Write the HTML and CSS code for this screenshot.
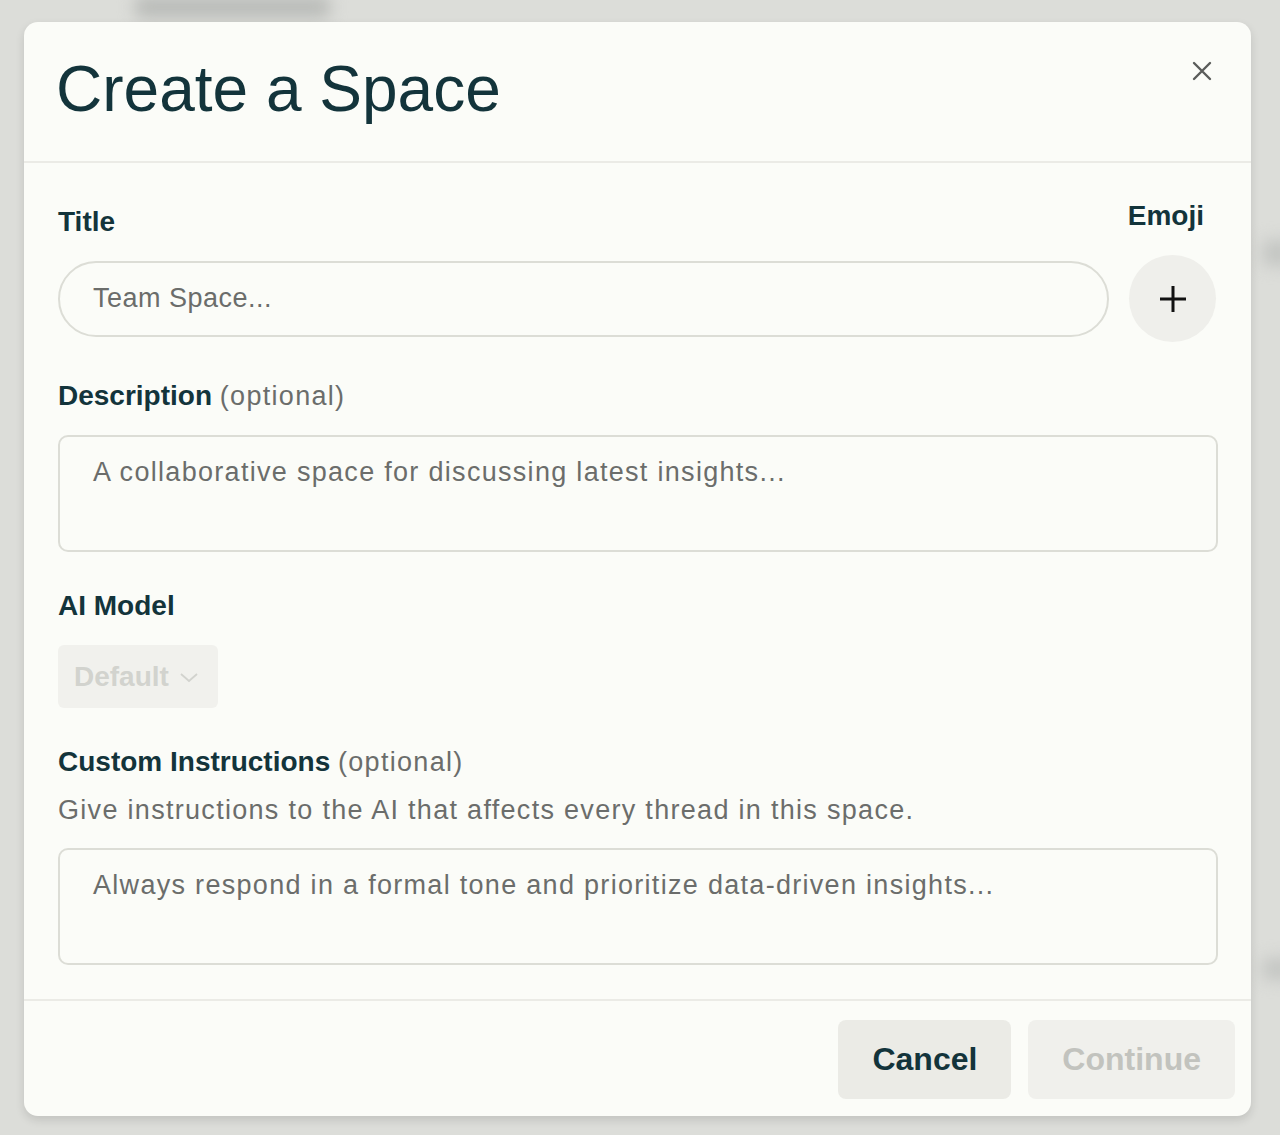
FILE: index.html
```html
<!DOCTYPE html>
<html lang="en">
<head>
  <meta charset="UTF-8">
  <title>Create a Space</title>
  <link rel="stylesheet" href="styles.css">
</head>
<body>
  <div class="backdrop">
    <div class="ghost ghost-title"></div>
    <div class="ghost ghost-right-1"></div>
    <div class="ghost ghost-right-2"></div>
  </div>

  <div class="modal">
    <div class="modal-header">
      <h1 class="modal-title">Create a Space</h1>
      <button class="close-btn" aria-label="Close">
        <svg width="20" height="20" viewBox="0 0 20 20">
          <path d="M2 2 L18 18 M18 2 L2 18" stroke="#5a5c5a" stroke-width="2.4" stroke-linecap="round" fill="none"/>
        </svg>
      </button>
    </div>

    <div class="modal-body">
      <div class="title-row">
        <div class="field grow">
          <label class="label">Title</label>
          <input class="pill-input" placeholder="Team Space...">
        </div>
        <div class="emoji-col">
          <span class="label emoji-label">Emoji</span>
          <button class="emoji-btn" aria-label="Add emoji">
            <svg width="28" height="28" viewBox="0 0 28 28">
              <path d="M14 1 V27 M1 14 H27" stroke="#111" stroke-width="3" fill="none"/>
            </svg>
          </button>
        </div>
      </div>

      <div class="field">
        <label class="label">Description <span class="optional">(optional)</span></label>
        <textarea class="text-box" placeholder="A collaborative space for discussing latest insights..."></textarea>
      </div>

      <div class="field">
        <label class="label">AI Model</label>
        <div>
          <button class="model-btn" disabled>
            Default
            <svg width="20" height="12" viewBox="0 0 20 12">
              <path d="M2 3 L10 10 L18 3" stroke="#d2d3ce" stroke-width="1.8" fill="none"/>
            </svg>
          </button>
        </div>
      </div>

      <div class="field">
        <div class="label-group">
          <label class="label">Custom Instructions <span class="optional">(optional)</span></label>
          <p class="helper">Give instructions to the AI that affects every thread in this space.</p>
        </div>
        <textarea class="text-box" placeholder="Always respond in a formal tone and prioritize data-driven insights..."></textarea>
      </div>
    </div>

    <div class="modal-footer">
      <button class="btn btn-cancel">Cancel</button>
      <button class="btn btn-continue" disabled>Continue</button>
    </div>
  </div>
</body>
</html>
```

FILE: styles.css
```css
body {
  font-family: 'Liberation Sans', Arial, sans-serif;
  background: #dcddd9;
  margin: 0;
  padding: 0;
  height: 1135px;
  overflow: hidden;
  position: relative;
}

.backdrop {
  position: absolute;
  inset: 0;
  overflow: hidden;
}

.ghost {
  position: absolute;
  background: #b9bbb8;
  filter: blur(8px);
  border-radius: 6px;
}

.ghost-title {
  left: 135px;
  top: -4px;
  width: 195px;
  height: 22px;
}

.ghost-right-1 {
  left: 1262px;
  top: 240px;
  width: 40px;
  height: 26px;
  background: #c4c6c3;
}

.ghost-right-2 {
  left: 1262px;
  top: 958px;
  width: 40px;
  height: 22px;
  background: #c4c6c3;
}

.modal {
  position: relative;
  margin: 22px 0 0 24px;
  width: 1227px;
  background: #fbfcf8;
  border-radius: 14px;
  box-shadow: 0 4px 10px rgba(0, 0, 0, 0.12);
  color: #13343b;
}

.modal-header {
  box-sizing: border-box;
  height: 141px;
  padding: 29px 29px 0 34px;
  display: flex;
  justify-content: space-between;
  align-items: flex-start;
  border-bottom: 2px solid #ebebe6;
}

.modal-title {
  margin: 0 0 0 -2px;
  font-size: 64px;
  line-height: 76px;
  font-weight: 400;
}

.close-btn {
  width: 40px;
  height: 40px;
  border: none;
  background: none;
  padding: 0;
  display: flex;
  align-items: center;
  justify-content: center;
  cursor: pointer;
}

.modal-body {
  padding: 35px 33px 34px 34px;
  display: flex;
  flex-direction: column;
  gap: 36px;
}

.title-row {
  display: flex;
  align-items: center;
  gap: 19px;
}

.field {
  display: flex;
  flex-direction: column;
  gap: 21px;
}

.grow {
  flex: 1;
}

.label {
  font-size: 28px;
  line-height: 36px;
  font-weight: 700;
  color: #13343b;
}

.optional {
  font-weight: 400;
  color: #6b6d6b;
  letter-spacing: 1.3px;
  font-size: 27px;
}

.emoji-col {
  display: flex;
  flex-direction: column;
  align-items: center;
  gap: 21px;
}

.emoji-label {
  margin-right: 14px;
}

.emoji-btn {
  width: 87px;
  height: 87px;
  border-radius: 50%;
  border: none;
  background: #efefeb;
  display: flex;
  align-items: center;
  justify-content: center;
  cursor: pointer;
}

.pill-input {
  box-sizing: border-box;
  width: 100%;
  height: 76px;
  border: 2px solid #dcddd6;
  border-radius: 38px;
  background: transparent;
  padding: 0 33px;
  font-family: inherit;
  font-size: 27px;
  letter-spacing: 0.5px;
  color: #13343b;
}

.text-box {
  box-sizing: border-box;
  width: 100%;
  height: 117px;
  border: 2px solid #dcddd6;
  border-radius: 10px;
  background: transparent;
  padding: 18px 33px;
  font-family: inherit;
  font-size: 27px;
  line-height: 34px;
  letter-spacing: 1.3px;
  color: #13343b;
  resize: none;
}

.pill-input::placeholder,
.text-box::placeholder {
  color: #6b6d6b;
}

.pill-input:focus,
.text-box:focus {
  outline: none;
}

.model-btn {
  height: 63px;
  padding: 0 19px 0 16px;
  border: none;
  border-radius: 6px;
  background: #f1f1ed;
  font-family: inherit;
  font-size: 28px;
  font-weight: 700;
  color: #d2d3ce;
  display: inline-flex;
  align-items: center;
  gap: 10px;
}

.label-group {
  display: flex;
  flex-direction: column;
  gap: 13px;
}

.helper {
  margin: 0;
  font-size: 27px;
  line-height: 34px;
  letter-spacing: 1.3px;
  color: #6b6d6b;
}

.modal-footer {
  border-top: 2px solid #ebebe6;
  padding: 19px 16px 17px;
  display: flex;
  justify-content: flex-end;
  gap: 17px;
}

.btn {
  height: 79px;
  padding: 0 34px;
  border: none;
  border-radius: 8px;
  font-family: inherit;
  font-size: 32px;
  font-weight: 700;
  cursor: pointer;
}

.btn-cancel {
  background: #ebebe6;
  color: #13343b;
}

.btn-continue {
  background: #f0f0ec;
  color: #c2c3be;
}
```
